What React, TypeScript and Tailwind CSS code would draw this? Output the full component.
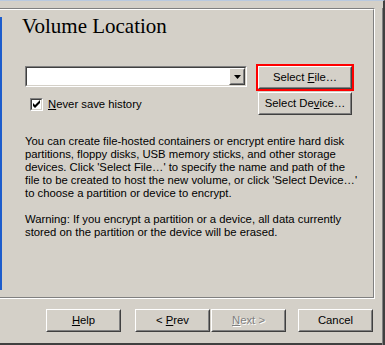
import type { ReactNode } from "react";

const ui = "font-['Liberation_Sans',Arial,sans-serif] text-[11.3px] leading-[13px] text-black";

function Raised({ children, className = "" }: { children: ReactNode; className?: string }) {
  return (
    <div className={`flex border border-t-white border-l-white border-r-[#404040] border-b-[#404040] ${className}`}>
      <div className="flex flex-1 items-center justify-center border border-t-[#d4d0c8] border-l-[#d4d0c8] border-r-[#808080] border-b-[#808080]">
        {children}
      </div>
    </div>
  );
}

function Sunken({ children, className = "" }: { children?: ReactNode; className?: string }) {
  return (
    <div className={`flex border border-t-[#808080] border-l-[#808080] border-r-white border-b-white ${className}`}>
      <div className="flex flex-1 bg-white border border-t-[#404040] border-l-[#404040] border-r-[#d4d0c8] border-b-[#d4d0c8]">
        {children}
      </div>
    </div>
  );
}

function Combo() {
  return (
    <Sunken className="mt-[2px] h-[21px] w-[222px]">
      <div className="flex-1" />
      <Raised className="w-[16px] bg-[#d4d0c8]">
        <svg width="7" height="4" viewBox="0 0 7 4">
          <path d="M0 0h7L3.5 4z" fill="#000" />
        </svg>
      </Raised>
    </Sunken>
  );
}

function Checkbox() {
  return (
    <Sunken className="h-[13px] w-[13px]">
      <svg width="9" height="9" viewBox="0 0 9 9" className="block">
        <path d="M1 3v3l2 2 5-5V0L3 5z" fill="#000" />
      </svg>
    </Sunken>
  );
}

function Button({ children, className = "" }: { children: ReactNode; className?: string }) {
  return (
    <Raised className={`h-[23px] w-[75px] ${className}`}>
      <span>{children}</span>
    </Raised>
  );
}

export default function App() {
  return (
    <div className={`w-[385px] h-[345px] bg-[#d4d0c8] border-t border-t-[#b9c9df] border-r-2 border-b-2 border-r-[#404040] border-b-[#404040] ${ui}`}>
      <div className="h-full border-r border-b border-r-[#808080] border-b-[#808080]">
        {/* wizard page frame */}
        <div className="mt-[7px] h-[291px] w-[375px] border-t border-r border-b border-t-[#808080] border-r-white border-b-white">
          <div className="flex h-full border-t border-r border-b border-t-white border-r-[#808080] border-b-[#808080]">
            <div className="mt-[7px] h-[273px] w-[2px] bg-[#1c5ccc]" />
            <div className="flex flex-col pl-[23px]">
              <h1 className="mt-[4px] -ml-[3px] font-['Liberation_Serif','Times_New_Roman',serif] text-[21px] leading-[24px]">
                Volume Location
              </h1>

              <div className="mt-[26px] flex">
                <div className="flex flex-col">
                  <Combo />
                  <label className="mt-[11px] ml-[5px] flex items-center">
                    <Checkbox />
                    <span className="ml-[5px]"><u>N</u>ever save history</span>
                  </label>
                </div>
                <div className="ml-[9px] flex flex-col">
                  <div className="border-2 border-[#ff0000]">
                    <Raised className="h-[23px] w-[94px]">
                      <span>Select <u>F</u>ile…</span>
                    </Raised>
                  </div>
                  <Raised className="mt-[1px] ml-[2px] h-[23px] w-[94px]">
                    <span>Select De<u>v</u>ice…</span>
                  </Raised>
                </div>
              </div>

              <p className="mt-[20px] whitespace-nowrap">
                You can create file-hosted containers or encrypt entire hard disk<br />
                partitions, floppy disks, USB memory sticks, and other storage<br />
                devices. Click 'Select File…' to specify the name and path of the<br />
                file to be created to host the new volume, or click 'Select Device…'<br />
                to choose a partition or device to encrypt.
              </p>
              <p className="mt-[13px] whitespace-nowrap">
                Warning: If you encrypt a partition or a device, all data currently<br />
                stored on the partition or the device will be erased.
              </p>
            </div>
          </div>
        </div>

        {/* navigation */}
        <div className="mt-[10px] flex pl-[46px]">
          <Button><u>H</u>elp</Button>
          <Button className="ml-[14px]">&lt; <u>P</u>rev</Button>
          <Button className="ml-px">
            <span className="text-[#808080] [text-shadow:1px_1px_0_#fff]"><u>N</u>ext &gt;</span>
          </Button>
          <Button className="ml-[12px]">Cancel</Button>
        </div>
      </div>
    </div>
  );
}
